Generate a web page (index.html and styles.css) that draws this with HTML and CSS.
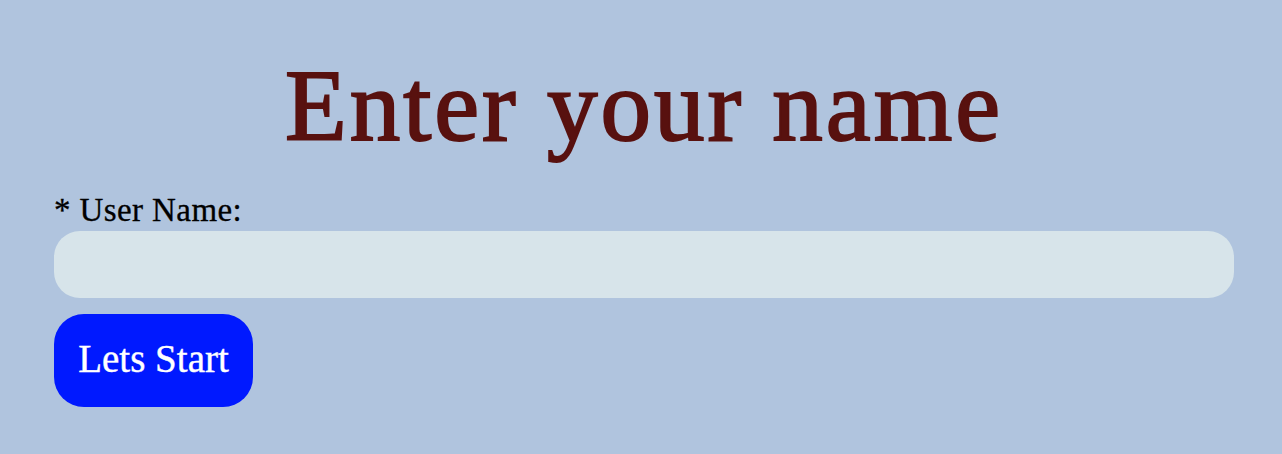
FILE: index.html
```html
<!DOCTYPE html>
<html>
<head>
<meta charset="utf-8">
<link rel="stylesheet" href="styles.css">
</head>
<body>
<main class="page">
  <h1 class="title">Enter your name</h1>
  <form class="form">
    <label class="label" for="user">* User Name:</label>
    <input class="input" id="user" type="text">
    <button class="btn" type="button">Lets Start</button>
  </form>
</main>
</body>
</html>
```
FILE: styles.css
```css
html, body {
  margin: 0;
  padding: 0;
  background: #b0c4de;
  height: 100%;
}
.page {
  padding: 0 48px 0 54px;
  font-family: "Liberation Serif", "DejaVu Serif", serif;
}
.title {
  margin: 0;
  padding-top: 51px;
  text-align: center;
  font-size: 101px;
  line-height: 110px;
  letter-spacing: 3px;
  font-weight: normal;
  color: #58110f;
  -webkit-text-stroke: 2px #58110f;
}
.form {
  display: flex;
  flex-direction: column;
  align-items: flex-start;
  margin-top: 31px;
}
.label {
  font-size: 33px;
  line-height: 36px;
  letter-spacing: 0.4px;
  margin-bottom: 3px;
  color: #000;
  -webkit-text-stroke: 0.3px #000;
}
.input {
  box-sizing: border-box;
  width: 100%;
  height: 67px;
  margin-top: 0;
  border: none;
  border-radius: 26px;
  background: #d7e4ea;
  outline: none;
}
.btn {
  margin-top: 16px;
  box-sizing: border-box;
  width: 199px;
  height: 93px;
  padding: 0 0 5px;
  border: none;
  border-radius: 30px;
  background: #0019ff;
  color: #fff;
  font-family: "Liberation Serif", "DejaVu Serif", serif;
  font-size: 39px;
  -webkit-text-stroke: 0.4px #fff;
}
```
